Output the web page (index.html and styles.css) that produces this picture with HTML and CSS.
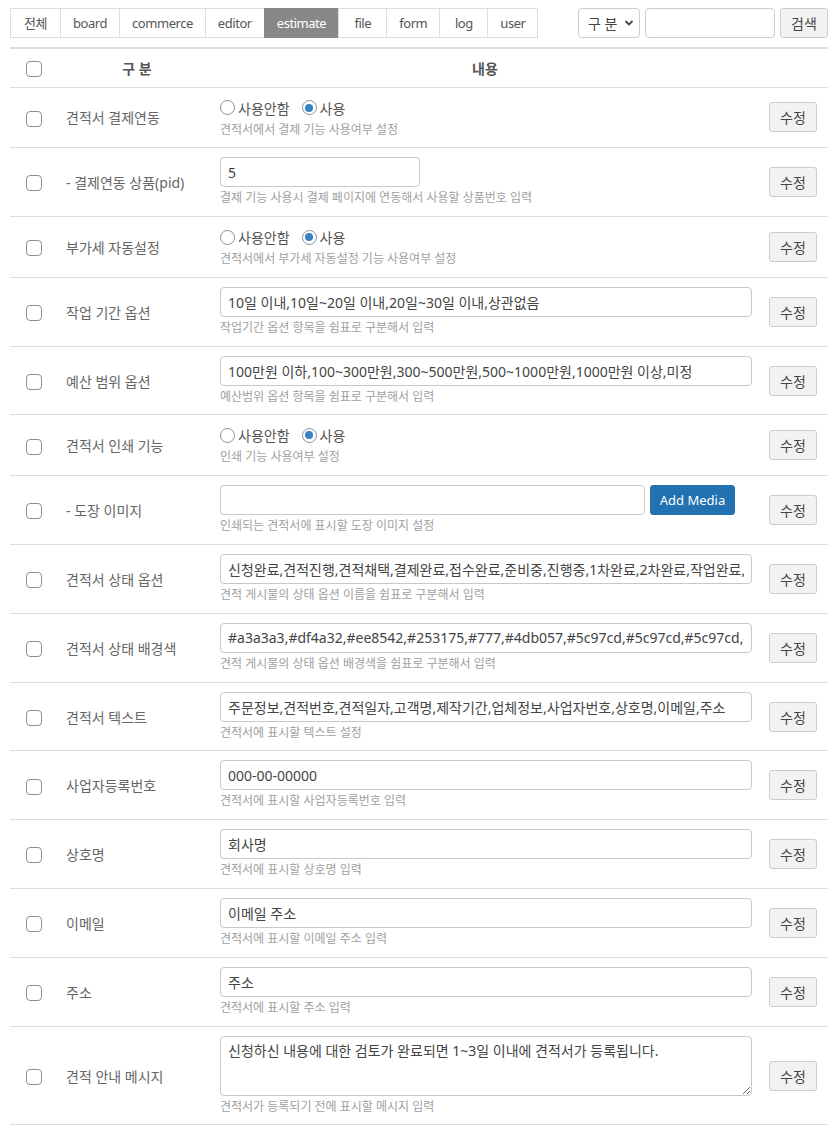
FILE: index.html
```html
<!DOCTYPE html>
<html lang="ko">
<head>
<meta charset="utf-8">
<title>설정</title>
<link rel="stylesheet" href="styles.css">
</head>
<body>
<div class="wrap">
  <div class="topbar">
    <ul class="tabs">
      <li class="tab">전체</li>
      <li class="tab">board</li>
      <li class="tab">commerce</li>
      <li class="tab">editor</li>
      <li class="tab active">estimate</li>
      <li class="tab">file</li>
      <li class="tab">form</li>
      <li class="tab">log</li>
      <li class="tab">user</li>
    </ul>
    <form class="search">
      <div class="select"><span>구 분</span><svg width="10" height="8" viewBox="0 0 10 8"><path d="M1.5 2 L5 5.5 L8.5 2" fill="none" stroke="#444" stroke-width="1.8"/></svg></div>
      <input class="search-input" type="text">
      <button type="button" class="btn">검색</button>
    </form>
  </div>

  <table class="grid">
    <colgroup>
      <col class="c-check"><col class="c-label"><col class="c-content"><col class="c-action">
    </colgroup>
    <thead>
      <tr>
        <th class="check"><span class="cb"></span></th>
        <th>구 분</th>
        <th>내용</th>
        <th></th>
      </tr>
    </thead>
    <tbody>
      <tr class="radio-row">
        <td class="check"><span class="cb"></span></td>
        <td class="label">견적서 결제연동</td>
        <td class="content">
          <div class="radios"><label class="radio"><span class="rb"></span>사용안함</label><label class="radio"><span class="rb on"></span>사용</label></div>
          <div class="help">견적서에서 결제 기능 사용여부 설정</div>
        </td>
        <td class="action"><button type="button" class="btn">수정</button></td>
      </tr>
      <tr>
        <td class="check"><span class="cb"></span></td>
        <td class="label">- 결제연동 상품(pid)</td>
        <td class="content">
          <input class="field short" type="text" value="5">
          <div class="help">결제 기능 사용시 결제 페이지에 연동해서 사용할 상품번호 입력</div>
        </td>
        <td class="action"><button type="button" class="btn">수정</button></td>
      </tr>
      <tr class="radio-row">
        <td class="check"><span class="cb"></span></td>
        <td class="label">부가세 자동설정</td>
        <td class="content">
          <div class="radios"><label class="radio"><span class="rb"></span>사용안함</label><label class="radio"><span class="rb on"></span>사용</label></div>
          <div class="help">견적서에서 부가세 자동설정 기능 사용여부 설정</div>
        </td>
        <td class="action"><button type="button" class="btn">수정</button></td>
      </tr>
      <tr>
        <td class="check"><span class="cb"></span></td>
        <td class="label">작업 기간 옵션</td>
        <td class="content">
          <input class="field" type="text" value="10일 이내,10일~20일 이내,20일~30일 이내,상관없음">
          <div class="help">작업기간 옵션 항목을 쉼표로 구분해서 입력</div>
        </td>
        <td class="action"><button type="button" class="btn">수정</button></td>
      </tr>
      <tr>
        <td class="check"><span class="cb"></span></td>
        <td class="label">예산 범위 옵션</td>
        <td class="content">
          <input class="field" type="text" value="100만원 이하,100~300만원,300~500만원,500~1000만원,1000만원 이상,미정">
          <div class="help">예산범위 옵션 항목을 쉼표로 구분해서 입력</div>
        </td>
        <td class="action"><button type="button" class="btn">수정</button></td>
      </tr>
      <tr class="radio-row">
        <td class="check"><span class="cb"></span></td>
        <td class="label">견적서 인쇄 기능</td>
        <td class="content">
          <div class="radios"><label class="radio"><span class="rb"></span>사용안함</label><label class="radio"><span class="rb on"></span>사용</label></div>
          <div class="help">인쇄 기능 사용여부 설정</div>
        </td>
        <td class="action"><button type="button" class="btn">수정</button></td>
      </tr>
      <tr>
        <td class="check"><span class="cb"></span></td>
        <td class="label">- 도장 이미지</td>
        <td class="content">
          <div class="media"><input class="field media-field" type="text" value=""><button type="button" class="btn-primary">Add Media</button></div>
          <div class="help">인쇄되는 견적서에 표시할 도장 이미지 설정</div>
        </td>
        <td class="action"><button type="button" class="btn">수정</button></td>
      </tr>
      <tr>
        <td class="check"><span class="cb"></span></td>
        <td class="label">견적서 상태 옵션</td>
        <td class="content">
          <input class="field" type="text" value="신청완료,견적진행,견적채택,결제완료,접수완료,준비중,진행중,1차완료,2차완료,작업완료,검수완료">
          <div class="help">견적 게시물의 상태 옵션 이름을 쉼표로 구분해서 입력</div>
        </td>
        <td class="action"><button type="button" class="btn">수정</button></td>
      </tr>
      <tr>
        <td class="check"><span class="cb"></span></td>
        <td class="label">견적서 상태 배경색</td>
        <td class="content">
          <input class="field" type="text" value="#a3a3a3,#df4a32,#ee8542,#253175,#777,#4db057,#5c97cd,#5c97cd,#5c97cd,#555,#a3a3a3">
          <div class="help">견적 게시물의 상태 옵션 배경색을 쉼표로 구분해서 입력</div>
        </td>
        <td class="action"><button type="button" class="btn">수정</button></td>
      </tr>
      <tr>
        <td class="check"><span class="cb"></span></td>
        <td class="label">견적서 텍스트</td>
        <td class="content">
          <input class="field" type="text" value="주문정보,견적번호,견적일자,고객명,제작기간,업체정보,사업자번호,상호명,이메일,주소">
          <div class="help">견적서에 표시할 텍스트 설정</div>
        </td>
        <td class="action"><button type="button" class="btn">수정</button></td>
      </tr>
      <tr>
        <td class="check"><span class="cb"></span></td>
        <td class="label">사업자등록번호</td>
        <td class="content">
          <input class="field" type="text" value="000-00-00000">
          <div class="help">견적서에 표시할 사업자등록번호 입력</div>
        </td>
        <td class="action"><button type="button" class="btn">수정</button></td>
      </tr>
      <tr>
        <td class="check"><span class="cb"></span></td>
        <td class="label">상호명</td>
        <td class="content">
          <input class="field" type="text" value="회사명">
          <div class="help">견적서에 표시할 상호명 입력</div>
        </td>
        <td class="action"><button type="button" class="btn">수정</button></td>
      </tr>
      <tr>
        <td class="check"><span class="cb"></span></td>
        <td class="label">이메일</td>
        <td class="content">
          <input class="field" type="text" value="이메일 주소">
          <div class="help">견적서에 표시할 이메일 주소 입력</div>
        </td>
        <td class="action"><button type="button" class="btn">수정</button></td>
      </tr>
      <tr>
        <td class="check"><span class="cb"></span></td>
        <td class="label">주소</td>
        <td class="content">
          <input class="field" type="text" value="주소">
          <div class="help">견적서에 표시할 주소 입력</div>
        </td>
        <td class="action"><button type="button" class="btn">수정</button></td>
      </tr>
      <tr>
        <td class="check"><span class="cb"></span></td>
        <td class="label">견적 안내 메시지</td>
        <td class="content">
          <textarea class="field area">신청하신 내용에 대한 검토가 완료되면 1~3일 이내에 견적서가 등록됩니다.</textarea>
          <div class="help">견적서가 등록되기 전에 표시할 메시지 입력</div>
        </td>
        <td class="action"><button type="button" class="btn">수정</button></td>
      </tr>
    </tbody>
  </table>
</div>
</body>
</html>
```

FILE: styles.css
```css
* { box-sizing: border-box; }
html, body { margin: 0; padding: 0; background: #fff; }
body {
  font-family: "Noto Sans", "Noto Sans CJK KR", sans-serif;
  font-size: 13px;
  color: #555;
}
.wrap { padding: 8px 11px 0 10px; }

.topbar { display: flex; justify-content: space-between; align-items: flex-start; }
.tabs { list-style: none; margin: 0; padding: 0; display: flex; }
.tab {
  height: 30px;
  min-width: 49px;
  line-height: 28px;
  padding: 0 12px;
  border: 1px solid #ddd;
  margin-left: -1px;
  color: #555;
  font-size: 13px;
  letter-spacing: -0.45px;
  text-align: center;
}
.tab:first-child { margin-left: 0; min-width: 51px; }
.tab.active { background: #888; border-color: #888; color: #fff; }

.search { display: flex; gap: 5px; margin: 0; }
.select {
  width: 62px; height: 30px;
  border: 1px solid #ccc; border-radius: 4px;
  display: flex; align-items: center; justify-content: space-between;
  padding: 0 5px 0 9px;
  font-size: 14px; color: #444;
}
.search-input { width: 130px; height: 30px; border: 1px solid #ccc; border-radius: 4px; margin: 0; }
.btn {
  height: 30px;
  padding: 0 8px;
  background: #f2f2f2;
  border: 1px solid #ccc;
  border-radius: 3px;
  font-family: inherit;
  font-size: 13px;
  color: #444;
  cursor: pointer;
}
.search .btn { width: 48px; font-size: 14px; }

.grid { width: 818px; border-collapse: collapse; margin-top: 9px; table-layout: fixed; }
.c-check { width: 48px; }
.c-label { width: 158px; }
.c-content { width: 538px; }
.c-action { width: 74px; }

.grid thead tr { border-top: 2px solid #ddd; border-bottom: 1px solid #ddd; }
.grid th { height: 39px; padding: 0; font-weight: bold; color: #555; font-size: 14px; text-align: center; }
.grid tbody tr { border-bottom: 1px solid #ddd; }
.grid td { padding: 9px 0; vertical-align: middle; }

.check { text-align: center; }
.cb {
  display: inline-block; width: 16px; height: 16px;
  border: 1px solid #8c8f94; border-radius: 4px; vertical-align: middle; background: #fff;
}
.grid th.check .cb { margin-top: -1px; }
td.label { padding-left: 8px; color: #666; font-size: 14px; }
td.content { padding-left: 4px; padding-right: 2px; }
td.action { padding-left: 15px; }
.action .btn { width: 48px; padding: 0; font-size: 14px; }

.field {
  display: block;
  width: 100%;
  height: 30px;
  margin: 0;
  border: 1px solid #c8c8c8;
  border-radius: 4px;
  padding: 0 7px;
  font-family: "Noto Sans", "Noto Sans CJK KR", sans-serif;
  font-size: 14px;
  color: #444;
  background: #fff;
  outline: none;
}
.field.short { width: 200px; }
.field.area { height: 60px; line-height: 20px; padding: 4px 7px; resize: vertical; }

.media { display: flex; gap: 5px; align-items: center; }
.field.media-field { width: 425px; }
.btn-primary {
  width: 85px; height: 30px;
  background: #2271b1; color: #fff;
  border: 1px solid #2271b1; border-radius: 3px;
  font-family: inherit; font-size: 13px; padding: 0;
}

.help { margin-top: 3px; font-size: 12px; line-height: 16.8px; color: #a0a0a0; }

.radios { height: 22px; display: flex; align-items: center; gap: 12px; color: #555; font-size: 14px; }
.radio { display: inline-flex; align-items: center; gap: 3px; }
.rb {
  width: 15px; height: 15px; border: 1px solid #8c8f94; border-radius: 50%;
  display: inline-flex; align-items: center; justify-content: center; background: #fff;
}
.rb.on::after { content: ""; width: 8px; height: 8px; border-radius: 50%; background: #3582c4; }
```
